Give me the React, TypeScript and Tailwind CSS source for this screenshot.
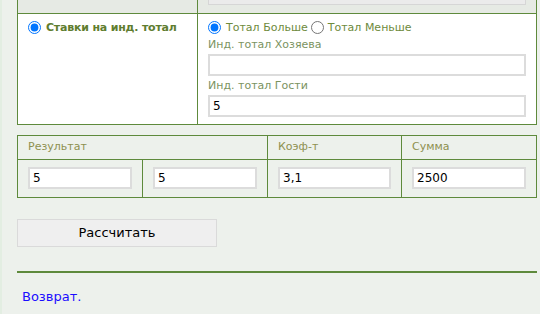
import React from 'react';

const font = { fontFamily: '"DejaVu Sans", Verdana, sans-serif' };

const Field = ({ value, className }: { value: string; className?: string }) => (
    <input
        type="text"
        defaultValue={value}
        className={`block h-[22px] w-full border-2 border-[#dcdcdc] bg-white px-[3px] text-[12px] leading-[16px] text-black outline-none ${className ?? ''}`}
    />
);

const Radio = ({ checked }: { checked?: boolean }) => (
    <input type="radio" defaultChecked={checked} className="m-0 h-[13px] w-[13px] shrink-0 accent-[#0075ff]" />
);

const App = () => {
    return (
        <div className="h-[314px] w-[540px] overflow-hidden border-l-2 border-[#e3eee2] bg-[#edf1ec] leading-[14px]" style={font}>
            <div className="pl-[15px] pr-[3px]">
                <table className="w-[520px] border-collapse">
                    <tbody>
                        <tr>
                            <td className="h-[13px] w-[180px] border border-t-0 border-[#5e8a3c] bg-[#e6eae4] p-0"></td>
                            <td className="h-[13px] border border-t-0 border-[#5e8a3c] bg-[#e6eae4] px-[10px] py-0 align-top">
                                <div className="h-[5px] border-x border-b border-[#d6d6d6] bg-[#ebebeb]" />
                            </td>
                        </tr>
                        <tr>
                            <td className="border border-[#5e8a3c] bg-white px-[10px] pt-[7px] align-top">
                                <label className="flex h-[14px] items-center gap-[5px] text-[11px] font-bold text-[#5f7d2f]">
                                    <Radio checked />
                                    <span className="tracking-[-0.2px]">Ставки на инд. тотал</span>
                                </label>
                            </td>
                            <td className="border border-[#5e8a3c] bg-white px-[10px] pt-[7px] pb-[7px] align-top">
                                <div className="flex h-[14px] items-center text-[11px] text-[#6e8a3c]">
                                    <Radio checked />
                                    <span className="ml-[5px] mr-[3px]">Тотал Больше</span>
                                    <Radio />
                                    <span className="ml-[4px]">Тотал Меньше</span>
                                </div>
                                <div className="mt-[3px] text-[11px] text-[#7b935f]">Инд. тотал Хозяева</div>
                                <Field value="" className="mt-[2px]" />
                                <div className="mt-[3px] text-[11px] text-[#7b935f]">Инд. тотал Гости</div>
                                <Field value="5" className="mt-[2px]" />
                            </td>
                        </tr>
                    </tbody>
                </table>

                <table className="mt-[10px] w-[520px] border-collapse">
                    <tbody>
                        <tr className="h-[24px] text-[11px] text-[#8d9050]">
                            <td colSpan={2} className="border border-[#5e8a3c] px-[10px] py-0">Результат</td>
                            <td className="w-[134px] border border-[#5e8a3c] px-[10px] py-0">Коэф-т</td>
                            <td className="w-[135px] border border-[#5e8a3c] px-[10px] py-0">Сумма</td>
                        </tr>
                        <tr className="h-[38px]">
                            <td className="w-[125px] border border-[#5e8a3c] px-[10px] py-0">
                                <Field value="5" />
                            </td>
                            <td className="w-[125px] border border-[#5e8a3c] px-[10px] py-0">
                                <Field value="5" />
                            </td>
                            <td className="border border-[#5e8a3c] px-[10px] py-0">
                                <Field value="3,1" />
                            </td>
                            <td className="border border-[#5e8a3c] px-[10px] py-0">
                                <Field value="2500" />
                            </td>
                        </tr>
                    </tbody>
                </table>

                <button className="mt-[21px] block h-[28px] w-[200px] border border-[#dadada] bg-[#efefef] text-[13px] leading-[16px] text-black">
                    Рассчитать
                </button>

                <div className="mt-[24px] h-[2px] w-[520px] bg-[#5e8a3c]" />

                <a href="#" className="mt-[16px] ml-[5px] block text-[13px] leading-[16px] text-[#1a0dff]">
                    Возврат.
                </a>
            </div>
        </div>
    );
};

export default App;
